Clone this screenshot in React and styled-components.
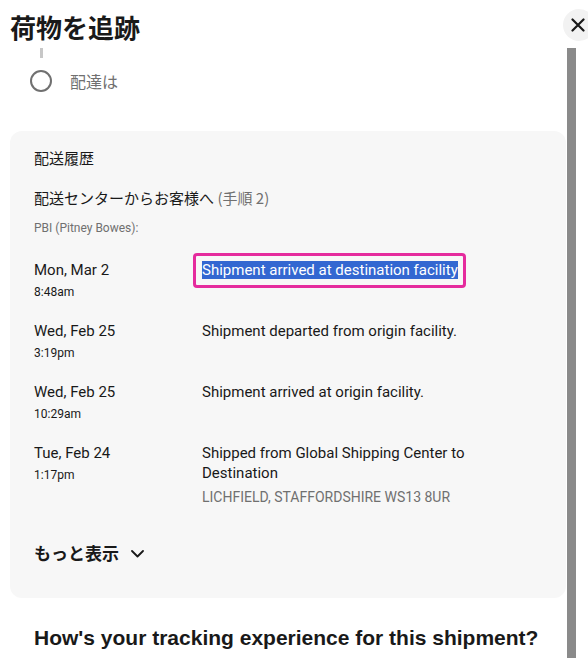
import React from "react";
import styled, { createGlobalStyle } from "styled-components";

const Global = createGlobalStyle`
  html, body { margin: 0; padding: 0; background: #fff; }
  body { font-family: Roboto, "Noto Sans CJK JP", sans-serif; color: #191919; }
`;

const Page = styled.div`
  width: 588px;
  height: 658px;
  overflow: hidden;
  position: relative;
  display: flex;
  flex-direction: column;
`;

const Header = styled.div`
  height: 48px;
  flex: none;
  display: flex;
  align-items: flex-start;
  justify-content: space-between;
  padding-left: 10px;
`;

const Title = styled.h1`
  margin: 11px 0 0;
  font-family: "Noto Sans CJK JP", sans-serif;
  font-size: 26px;
  line-height: 32px;
  font-weight: 700;
  color: #191919;
`;

const CloseButton = styled.button`
  position: absolute;
  top: 9px;
  left: 563px;
  width: 32px;
  height: 32px;
  border-radius: 50%;
  border: none;
  background: #f2f2f2;
  padding: 0;
  display: flex;
  align-items: center;
  justify-content: center;
  svg { margin-left: -3px; }
`;

const Body = styled.div`
  flex: 1;
  display: flex;
  min-height: 0;
`;

const Content = styled.div`
  width: 567px;
  flex: none;
`;

const ScrollRail = styled.div`
  width: 9px;
  flex: none;
  background: #8a8a8a;
`;

const Status = styled.div`
  padding-left: 30px;
`;

const StatusLine = styled.div`
  width: 3px;
  height: 10px;
  margin-left: 10px;
  background: #c7c7c7;
`;

const StatusRow = styled.div`
  display: flex;
  align-items: center;
  margin-top: 12px;
  gap: 18px;
`;

const Circle = styled.div`
  width: 18px;
  height: 18px;
  border: 2px solid #707070;
  border-radius: 50%;
`;

const StatusText = styled.span`
  font-family: "Noto Sans CJK JP", sans-serif;
  font-size: 16px;
  line-height: 22px;
  color: #707070;
`;

const Panel = styled.section`
  margin: 39px 0 0 10px;
  width: 556px;
  box-sizing: border-box;
  background: #f7f7f7;
  border-radius: 12px;
  padding: 17px 24px 35px;
`;

const PanelTitle = styled.div`
  font-family: "Noto Sans CJK JP", sans-serif;
  font-size: 15px;
  line-height: 20px;
`;

const Leg = styled.div`
  margin-top: 20px;
  font-family: "Noto Sans CJK JP", sans-serif;
  font-size: 15px;
  line-height: 20px;
`;

const Muted = styled.span`
  color: #707070;
`;

const Carrier = styled.div`
  margin-top: 12px;
  font-size: 12px;
  line-height: 16px;
  color: #707070;
`;

const Events = styled.div`
  margin-top: 24px;
  display: flex;
  flex-direction: column;
  gap: 20px;
`;

const EventRow = styled.div`
  display: grid;
  grid-template-columns: 168px 1fr;
`;

const DateCol = styled.div``;

const DateText = styled.div`
  font-size: 15px;
  line-height: 20px;
`;

const TimeText = styled.div`
  margin-top: 3px;
  font-size: 12px;
  line-height: 18px;
`;

const Desc = styled.div`
  font-size: 15px;
  line-height: 20px;
`;

const Location = styled.div`
  margin-top: 4px;
  font-size: 14px;
  line-height: 20px;
  color: #707070;
`;

const Highlight = styled.span`
  display: inline-block;
  margin: -8px 0 0 -9px;
  padding: 6px 5px 6px 6px;
  border: 3px solid #e52b9d;
  border-radius: 4px;
  line-height: 17px;
`;

const Selected = styled.span`
  background: #3367d1;
  color: #fff;
`;

const MoreButton = styled.button`
  margin-top: 36px;
  display: flex;
  align-items: center;
  gap: 12px;
  padding: 0;
  border: none;
  background: none;
  font-family: "Noto Sans CJK JP", sans-serif;
  font-size: 17px;
  line-height: 20px;
  font-weight: 700;
  color: #191919;
  svg { margin-top: 2px; }
`;

const Survey = styled.h2`
  margin: 28px 0 0 34px;
  font-family: "Liberation Sans", Arial, sans-serif;
  font-size: 21px;
  line-height: 24px;
  font-weight: 700;
  color: #191919;
`;

const events = [
  { date: "Mon, Mar 2", time: "8:48am", desc: "Shipment arrived at destination facility", highlight: true },
  { date: "Wed, Feb 25", time: "3:19pm", desc: "Shipment departed from origin facility." },
  { date: "Wed, Feb 25", time: "10:29am", desc: "Shipment arrived at origin facility." },
  {
    date: "Tue, Feb 24",
    time: "1:17pm",
    desc: "Shipped from Global Shipping Center to Destination",
    location: "LICHFIELD, STAFFORDSHIRE WS13 8UR",
  },
];

export default function App() {
  return (
    <Page>
      <Global />
      <Header>
        <Title>荷物を追跡</Title>
        <CloseButton aria-label="閉じる">
          <svg width="14" height="14" viewBox="0 0 14 14">
            <path d="M1.5 1.5 L12.5 12.5 M12.5 1.5 L1.5 12.5" stroke="#191919" strokeWidth="2.2" strokeLinecap="round" />
          </svg>
        </CloseButton>
      </Header>
      <Body>
        <Content>
          <Status>
            <StatusLine />
            <StatusRow>
              <Circle />
              <StatusText>配達は</StatusText>
            </StatusRow>
          </Status>
          <Panel>
            <PanelTitle>配送履歴</PanelTitle>
            <Leg>
              配送センターからお客様へ <Muted>(手順 2)</Muted>
            </Leg>
            <Carrier>PBI (Pitney Bowes):</Carrier>
            <Events>
              {events.map((e, i) => (
                <EventRow key={i}>
                  <DateCol>
                    <DateText>{e.date}</DateText>
                    <TimeText>{e.time}</TimeText>
                  </DateCol>
                  <div>
                    <Desc>
                      {e.highlight ? (
                        <Highlight>
                          <Selected>{e.desc}</Selected>
                        </Highlight>
                      ) : (
                        e.desc
                      )}
                    </Desc>
                    {e.location && <Location>{e.location}</Location>}
                  </div>
                </EventRow>
              ))}
            </Events>
            <MoreButton>
              もっと表示
              <svg width="13" height="8" viewBox="0 0 13 8">
                <path d="M1 1 L6.5 6.5 L12 1" stroke="#191919" strokeWidth="1.8" fill="none" strokeLinecap="round" strokeLinejoin="round" />
              </svg>
            </MoreButton>
          </Panel>
          <Survey>How's your tracking experience for this shipment?</Survey>
        </Content>
        <ScrollRail />
      </Body>
    </Page>
  );
}
